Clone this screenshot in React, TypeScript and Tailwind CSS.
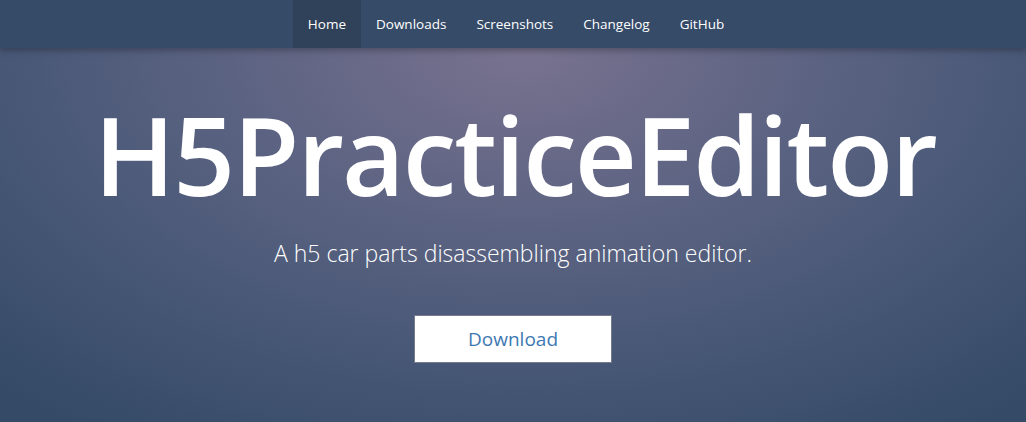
import React from "react";

export default function App() {
  const links = ["Home", "Downloads", "Screenshots", "Changelog", "GitHub"];
  return (
    <div
      className="w-[1026px] h-[422px] overflow-hidden flex flex-col bg-[radial-gradient(ellipse_75%_110%_at_51%_12%,#78728f_0%,#5c6382_38%,#465675_70%,#344a66_100%)]"
      style={{ fontFamily: '"Open Sans", "Noto Sans", sans-serif' }}
    >
      <nav className="h-[48px] bg-[#364b68] shadow-[0_3px_6px_rgba(0,0,0,0.25)] flex justify-center relative z-10">
        <ul className="flex ml-[6px]">
          {links.map((l, i) => (
            <li key={l}>
              <a
                className={`h-[48px] flex items-center px-[15px] text-[13.5px] text-white ${
                  i === 0 ? "bg-[#2f4259]" : ""
                }`}
              >
                {l}
              </a>
            </li>
          ))}
        </ul>
      </nav>
      <main className="flex flex-col items-center">
        <h1 className="mt-[42px] text-[108px] leading-[130px] font-semibold text-white tracking-[-2px] ml-[4px]">
          H5PracticeEditor
        </h1>
        <p className="mt-[17px] text-[23px] leading-[32px] font-light text-white">
          A h5 car parts disassembling animation editor.
        </p>
        <button className="mt-[46px] w-[198px] h-[48px] bg-white border border-[#767c8e] text-[#3d78b2] text-[19px] font-normal">
          Download
        </button>
      </main>
    </div>
  );
}
